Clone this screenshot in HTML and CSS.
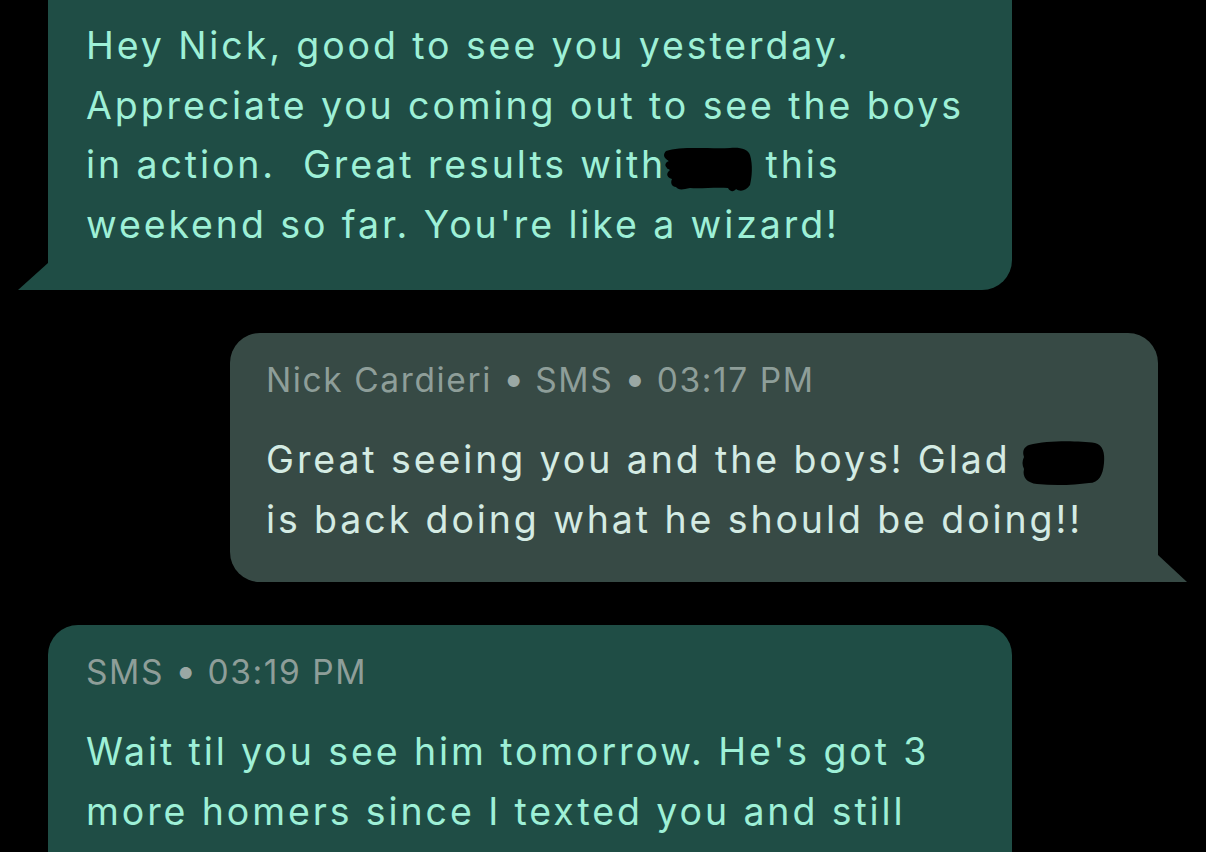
FILE: index.html
```html
<!DOCTYPE html>
<html>
<head>
<meta charset="utf-8">
<link rel="stylesheet" href="styles.css">
</head>
<body>
<div class="thread">
  <div class="row row-in first">
    <div class="bubble bubble-out">
      <p class="msg">Hey Nick, good to see you yesterday.<br>Appreciate you coming out to see the boys<br>in action.&nbsp; Great results with<span class="redact r1"><svg viewBox="0 0 96 50" width="96" height="50"><path d="M6 8 C20 3 50 6 70 5 C80 4 88 6 90 12 C93 22 92 34 90 42 C86 48 80 49 76 46 C74 49 70 49 68 45 C55 44 40 46 30 45 C22 47 18 47 16 44 C12 44 10 40 12 36 C6 34 6 30 10 27 C4 24 4 20 9 18 C3 15 3 11 6 8 Z" fill="#000"/><path d="M8 16 L16 16 M7 24 L15 24 M8 32 L16 32" stroke="#000" stroke-width="3"/></svg></span> this<br>weekend so far. You're like a wizard!</p>
    </div>
    <div class="tail tail-left"></div>
  </div>

  <div class="row row-out">
    <div class="bubble bubble-in">
      <div class="meta">Nick Cardieri <span class="dot">•</span> SMS <span class="dot">•</span> 03:17 PM</div>
      <p class="msg msg-light">Great seeing you and the boys! Glad<span class="redact r2"><svg viewBox="0 0 86 48" width="86" height="48"><path d="M10 6 C30 1 60 2 76 4 C84 6 86 14 85 24 C84 36 80 44 70 44 C56 46 36 47 18 45 C8 44 3 38 5 30 C3 26 3 22 5 18 C3 12 5 8 10 6 Z" fill="#000"/></svg></span><br>is back doing what he should be doing!!</p>
    </div>
    <div class="tail tail-right"></div>
  </div>

  <div class="row row-in">
    <div class="bubble bubble-out last">
      <div class="meta">SMS <span class="dot">•</span> 03:19 PM</div>
      <p class="msg">Wait til you see him tomorrow. He's got 3<br>more homers since I texted you and still</p>
    </div>
  </div>
</div>
</body>
</html>
```

FILE: styles.css
```css
html, body {
  margin: 0;
  padding: 0;
  background: #000;
  height: 100%;
  overflow: hidden;
}

.thread {
  display: flex;
  flex-direction: column;
  gap: 43px;
  font-family: Inter, "Noto Sans", sans-serif;
}

.row {
  position: relative;
  display: flex;
}

.row-in {
  padding-left: 48px;
}

.row-out {
  padding-left: 230px;
}

.first {
  margin-top: -30px;
}

.bubble {
  border-radius: 30px;
  box-sizing: border-box;
}

.bubble-out {
  width: 964px;
  background: #1f4d45;
  padding: 29px 30px 36px 38px;
  border-bottom-left-radius: 0;
}

.first .bubble-out {
  padding-top: 46px;
}

.bubble-in {
  width: 928px;
  background: #374a45;
  padding: 29px 30px 33px 36px;
  border-bottom-right-radius: 0;
}

.last {
  height: 300px;
}

.msg {
  margin: 0;
  font-size: 37.5px;
  line-height: 59.5px;
  letter-spacing: 2.9px;
  color: #9ef0d7;
  white-space: nowrap;
}

.msg-light {
  color: #d4ebe3;
}

.meta {
  font-size: 33.5px;
  line-height: 36px;
  letter-spacing: 1.6px;
  color: #8e9e99;
  margin-bottom: 32px;
  white-space: nowrap;
}

.dot {
  font-size: 38px;
  line-height: 20px;
  letter-spacing: 0;
  color: #9aa8a4;
}

.redact {
  display: inline-block;
  vertical-align: middle;
  line-height: 0;
}

.r1 {
  margin-left: -6px;
  margin-right: -4px;
}

.r2 {
  margin-left: 8px;
}

.tail {
  position: absolute;
  bottom: 0;
  width: 0;
  height: 0;
}

.tail-left {
  left: 18px;
  border-right: 30px solid #1f4d45;
  border-top: 27px solid transparent;
}

.tail-right {
  left: 1158px;
  border-left: 29px solid #374a45;
  border-top: 27px solid transparent;
}
```
